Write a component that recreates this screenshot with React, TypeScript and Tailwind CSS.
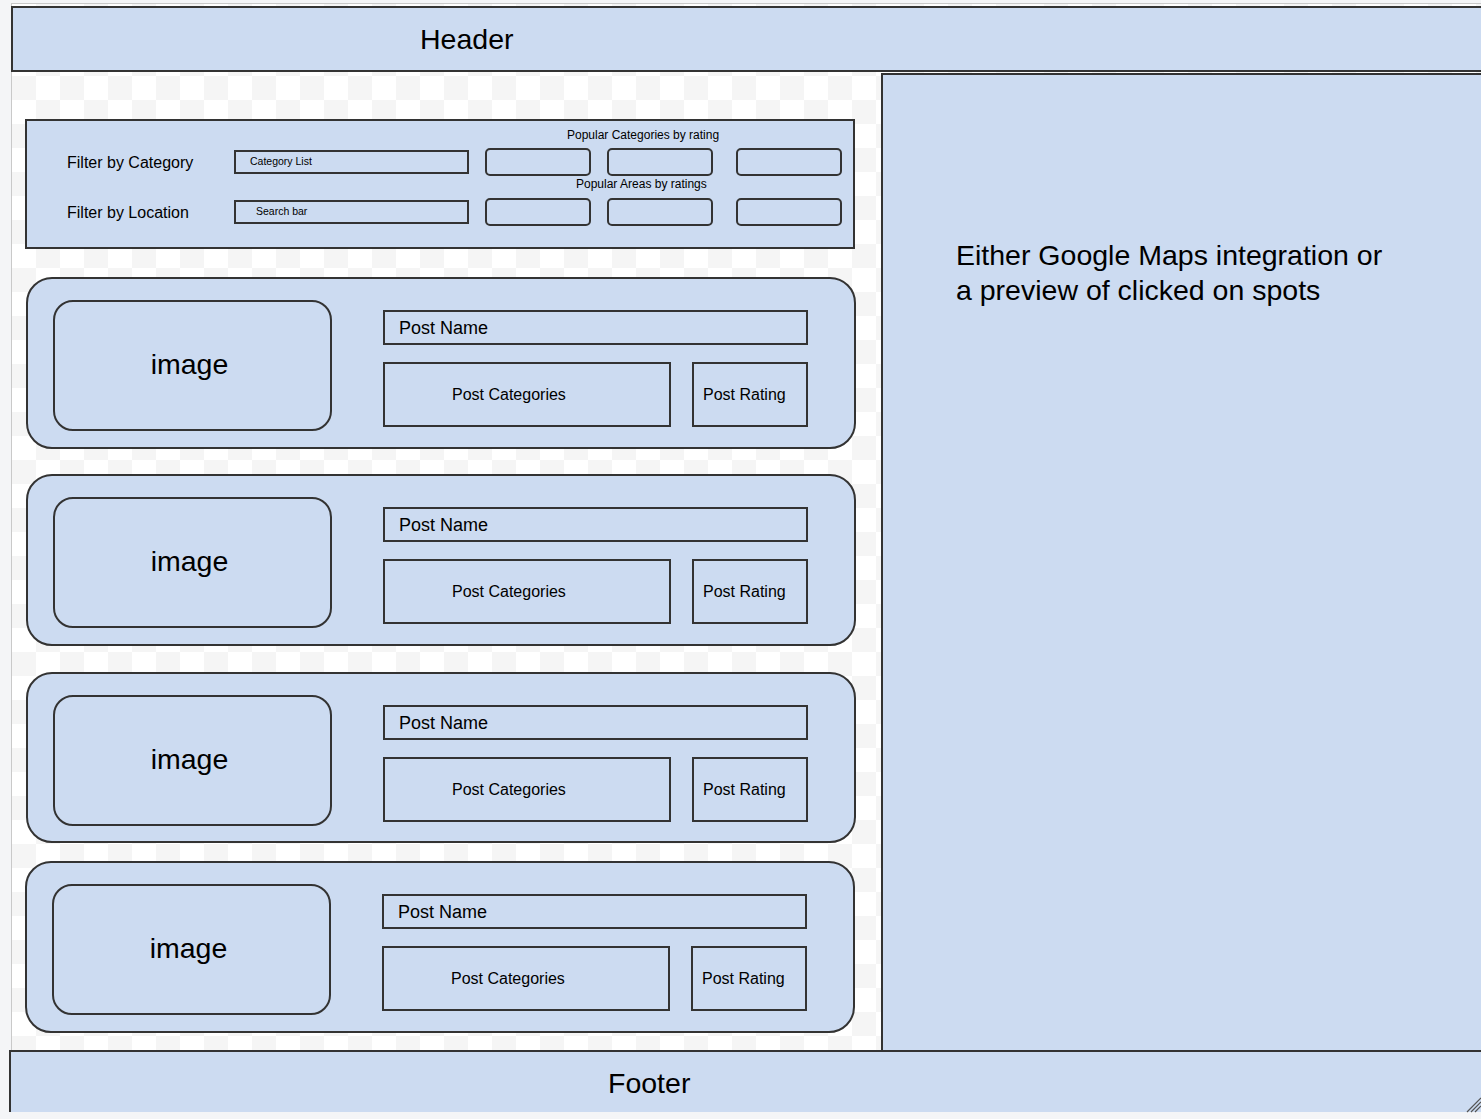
import React from "react";

const BLUE = "bg-[#ccdbf1]";

function Card({ ml, mt, h }: { ml: string; mt: string; h: string }) {
  return (
    <div
      className={`${ml} ${mt} ${h} w-[830px] shrink-0 rounded-[26px] border-2 border-[#333] ${BLUE} flex pl-[25px] pt-[21px]`}
    >
      <div className="w-[279px] h-[131px] rounded-[20px] border-2 border-[#333] flex items-center justify-center text-[28.5px] pb-[2px] pr-[6px]">
        image
      </div>
      <div className="ml-[51px] pt-[10px] w-[425px] flex flex-col">
        <div className="h-[35px] border-2 border-[#333] flex items-center pl-[14px] text-[18px] pt-[1px]">
          Post Name
        </div>
        <div className="mt-[17px] flex gap-[21px]">
          <div className="w-[288px] h-[65px] border-2 border-[#333] flex items-center pl-[67px] text-[16px]">
            Post Categories
          </div>
          <div className="w-[116px] h-[65px] border-2 border-[#333] flex items-center pl-[9px] text-[16px]">
            Post Rating
          </div>
        </div>
      </div>
    </div>
  );
}

function Pills() {
  return (
    <div className="flex">
      <div className="ml-[16px] w-[106px] h-[28px] rounded-[5px] border-2 border-[#333]" />
      <div className="ml-[16px] w-[106px] h-[28px] rounded-[5px] border-2 border-[#333]" />
      <div className="ml-[23px] w-[106px] h-[28px] rounded-[5px] border-2 border-[#333]" />
    </div>
  );
}

export default function App() {
  return (
    <div className="w-[1481px] h-[1119px] bg-[#f4f5f7] overflow-hidden relative font-['Liberation_Sans',Arial,sans-serif] text-black">
      <div className="ml-[11px] mt-[3px] w-[1500px] h-[1109px] border-l border-t border-[#c9c9c9] bg-[repeating-conic-gradient(#f5f5f5_0_25%,#ffffff_0_50%)] bg-size-[48px_48px] flex flex-col">
        {/* Header */}
        <div className={`mt-[2px] -ml-[1px] w-[1500px] h-[66px] shrink-0 border-2 border-[#333] ${BLUE} flex items-center pl-[407px] text-[28.5px]`}>
          Header
        </div>
        {/* Middle */}
        <div className="flex h-[978px] shrink-0">
          <div className="w-[869px] shrink-0 flex flex-col">
            {/* Filter box */}
            <div className={`ml-[13px] mt-[47px] w-[830px] h-[130px] shrink-0 border-2 border-[#333] ${BLUE} flex flex-col`}>
              <div className="mt-[7px] h-[14px] leading-[14px] text-[12px] pl-[540px]">
                Popular Categories by rating
              </div>
              <div className="mt-[6px] h-[28px] flex items-center">
                <div className="w-[207px] pl-[40px] text-[16px] pt-[1px]">Filter by Category</div>
                <div className="w-[235px] h-[24px] border-2 border-[#333] flex items-center pl-[14px] text-[10.5px]">
                  Category List
                </div>
                <Pills />
              </div>
              <div className="mt-[1px] h-[14px] leading-[14px] text-[12px] pl-[549px]">
                Popular Areas by ratings
              </div>
              <div className="mt-[7px] h-[28px] flex items-center">
                <div className="w-[207px] pl-[40px] text-[16px] pt-[1px]">Filter by Location</div>
                <div className="w-[235px] h-[24px] border-2 border-[#333] flex items-center pl-[20px] text-[10.5px]">
                  Search bar
                </div>
                <Pills />
              </div>
            </div>
            <Card ml="ml-[14px]" mt="mt-[28px]" h="h-[172px]" />
            <Card ml="ml-[14px]" mt="mt-[25px]" h="h-[172px]" />
            <Card ml="ml-[14px]" mt="mt-[26px]" h="h-[171px]" />
            <Card ml="ml-[13px]" mt="mt-[18px]" h="h-[172px]" />
          </div>
          <div className={`mt-[1px] flex-1 border-l-2 border-t-2 border-[#333] ${BLUE} pl-[73px] pt-[163px] text-[28.5px] leading-[35px]`}>
            Either Google Maps integration or
            <br />a preview of clicked on spots
          </div>
        </div>
        {/* Footer */}
        <div className={`-ml-[3px] w-[1500px] h-[62px] shrink-0 border-t-2 border-l-2 border-[#333] ${BLUE} flex items-center pl-[597px] pt-[3px] text-[28.5px] relative`}>
          Footer
        </div>
      </div>
      <svg
        className="absolute left-[1465px] top-[1096px]"
        width="16"
        height="17"
        viewBox="0 0 16 17"
      >
        <line x1="2" y1="16" x2="16" y2="2" stroke="#555" strokeWidth="1.2" />
        <line x1="6" y1="16" x2="16" y2="6" stroke="#555" strokeWidth="1.2" />
        <line x1="10" y1="16" x2="16" y2="10" stroke="#555" strokeWidth="1.2" />
      </svg>
    </div>
  );
}
